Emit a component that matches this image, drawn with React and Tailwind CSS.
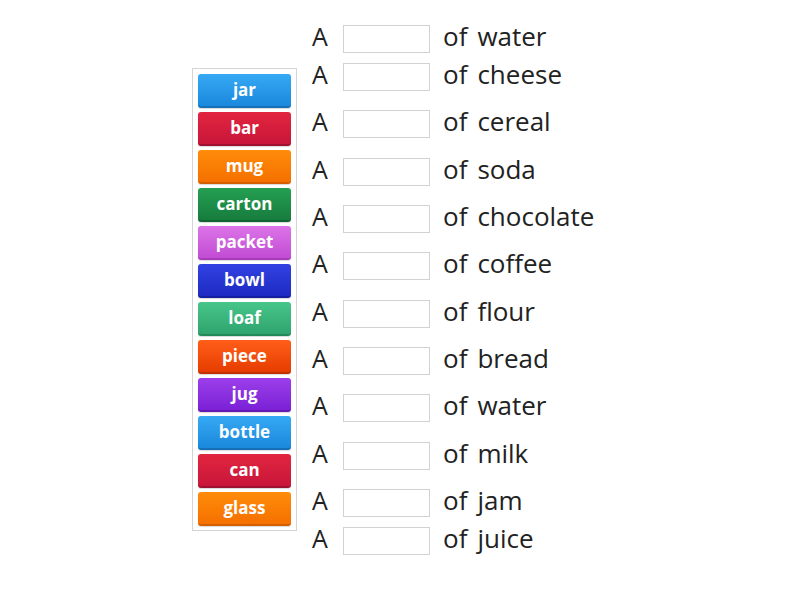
import React from 'react';

// word tiles in the left bank
const tiles = [
  { word: 'jar', cls: 'bg-gradient-to-b from-[#36a9f4] to-[#1a88dc] border-b-[#1570b8]' },
  { word: 'bar', cls: 'bg-gradient-to-b from-[#e2253f] to-[#c8163a] border-b-[#a01030]' },
  { word: 'mug', cls: 'bg-gradient-to-b from-[#ff8c0a] to-[#f57000] border-b-[#d45e00]' },
  { word: 'carton', cls: 'bg-gradient-to-b from-[#24a052] to-[#177c3e] border-b-[#106430]' },
  { word: 'packet', cls: 'bg-gradient-to-b from-[#dc74e8] to-[#c24cd4] border-b-[#a63cb8]' },
  { word: 'bowl', cls: 'bg-gradient-to-b from-[#3242e2] to-[#1e2ac2] border-b-[#161f9e]' },
  { word: 'loaf', cls: 'bg-gradient-to-b from-[#46c68a] to-[#30a46e] border-b-[#248a5a]' },
  { word: 'piece', cls: 'bg-gradient-to-b from-[#ff5e18] to-[#e63c00] border-b-[#c23200]' },
  { word: 'jug', cls: 'bg-gradient-to-b from-[#9c3eea] to-[#7b20d6] border-b-[#6418b4]' },
  { word: 'bottle', cls: 'bg-gradient-to-b from-[#36a9f4] to-[#1a88dc] border-b-[#1570b8]' },
  { word: 'can', cls: 'bg-gradient-to-b from-[#e2253f] to-[#c8163a] border-b-[#a01030]' },
  { word: 'glass', cls: 'bg-gradient-to-b from-[#ff8c0a] to-[#f57000] border-b-[#d45e00]' },
];

// sentences on the right, with the gap above each one
const rows = [
  { noun: 'water', gap: 'mt-0' },
  { noun: 'cheese', gap: 'mt-0' },
  { noun: 'cereal', gap: 'mt-[9px]' },
  { noun: 'soda', gap: 'mt-[10px]' },
  { noun: 'chocolate', gap: 'mt-[9px]' },
  { noun: 'coffee', gap: 'mt-[9px]' },
  { noun: 'flour', gap: 'mt-[10px]' },
  { noun: 'bread', gap: 'mt-[9px]' },
  { noun: 'water', gap: 'mt-[9px]' },
  { noun: 'milk', gap: 'mt-[10px]' },
  { noun: 'jam', gap: 'mt-[9px]' },
  { noun: 'juice', gap: 'mt-0' },
];

function Tile({ word, cls }) {
  return (
    <div
      className={`h-[34px] w-[93px] rounded-[3px] border-b-2 flex items-center justify-center text-white font-bold text-[17px] leading-none shadow-[0_1px_1px_rgba(0,0,0,0.15)] ${cls}`}
    >
      <span className="mb-[2px]">{word}</span>
    </div>
  );
}

function Row({ noun, gap }) {
  return (
    <div className={`h-[38px] flex items-center ${gap}`}>
      <span className="w-[31px] text-[25px] leading-none mb-[2px]">A</span>
      <div className="w-[87px] h-[28px] mt-[4px] border border-[#d2d2d2] bg-white" />
      <span className="ml-[13px] text-[26px] leading-none mb-[2px]">of</span>
      <span className="ml-[10px] text-[26px] leading-none mb-[2px]">{noun}</span>
    </div>
  );
}

export default function App() {
  return (
    <div
      className="w-[800px] h-[600px] bg-white text-[#222] flex items-start"
      style={{ fontFamily: '"Open Sans", "Noto Sans", sans-serif' }}
    >
      <div className="ml-[192px] mt-[68px] w-[105px] border border-[#d4d4d4] px-[5px] pt-[5px] pb-[4px] flex flex-col gap-[4px]">
        {tiles.map((t, i) => (
          <Tile key={i} {...t} />
        ))}
      </div>
      <div className="ml-[15px] mt-[18px] flex flex-col">
        {rows.map((r, i) => (
          <Row key={i} {...r} />
        ))}
      </div>
    </div>
  );
}
